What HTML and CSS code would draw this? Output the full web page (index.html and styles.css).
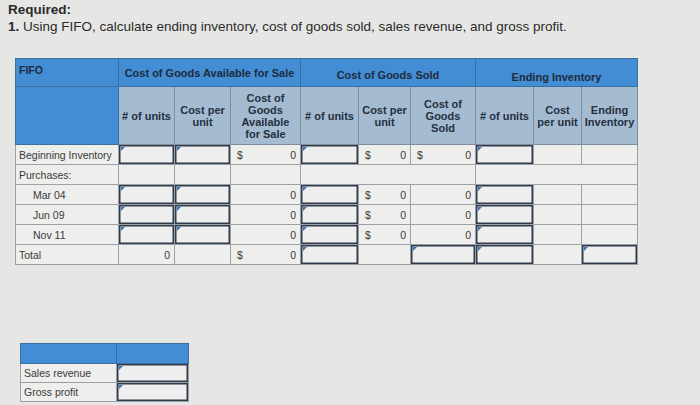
FILE: index.html
```html
<!DOCTYPE html>
<html>
<head>
<meta charset="utf-8">
<link rel="stylesheet" href="styles.css">
</head>
<body>
<div class="page">
  <div class="req">Required:</div>
  <div class="q"><b>1.</b> Using FIFO, calculate ending inventory, cost of goods sold, sales revenue, and gross profit.</div>

  <table class="grid">
    <colgroup>
      <col class="c-label"><col class="c1"><col class="c2"><col class="c3"><col class="c4"><col class="c5"><col class="c6"><col class="c7"><col class="c8"><col class="c9">
    </colgroup>
    <tr class="h1">
      <th class="fifo">FIFO</th>
      <th colspan="3" class="grp">Cost of Goods Available for Sale</th>
      <th colspan="3" class="grp g2">Cost of Goods Sold</th>
      <th colspan="3" class="grp g3">Ending Inventory</th>
    </tr>
    <tr class="h2">
      <th class="blank"></th>
      <th class="sub">#&nbsp;of units</th>
      <th class="sub">Cost per<br>unit</th>
      <th class="sub">Cost of<br>Goods<br>Available<br>for Sale</th>
      <th class="sub">#&nbsp;of units</th>
      <th class="sub">Cost per<br>unit</th>
      <th class="sub">Cost of<br>Goods<br>Sold</th>
      <th class="sub">#&nbsp;of units</th>
      <th class="sub">Cost<br>per unit</th>
      <th class="sub">Ending<br>Inventory</th>
    </tr>
    <tr>
      <td class="lbl">Beginning Inventory</td>
      <td class="in"></td><td class="in"></td>
      <td class="val"><span class="d">$</span><span>0</span></td>
      <td class="in"></td>
      <td class="val"><span class="d">$</span><span>0</span></td>
      <td class="val"><span class="d">$</span><span>0</span></td>
      <td class="in"></td><td></td><td></td>
    </tr>
    <tr>
      <td class="lbl">Purchases:</td>
      <td></td><td></td><td></td><td colspan="3"></td><td colspan="3"></td>
    </tr>
    <tr>
      <td class="lbl ind">Mar 04</td>
      <td class="in"></td><td class="in"></td>
      <td class="val r">0</td>
      <td class="in"></td>
      <td class="val"><span class="d">$</span><span>0</span></td>
      <td class="val r">0</td>
      <td class="in"></td><td></td><td></td>
    </tr>
    <tr>
      <td class="lbl ind">Jun 09</td>
      <td class="in"></td><td class="in"></td>
      <td class="val r">0</td>
      <td class="in"></td>
      <td class="val"><span class="d">$</span><span>0</span></td>
      <td class="val r">0</td>
      <td class="in"></td><td></td><td></td>
    </tr>
    <tr>
      <td class="lbl ind">Nov 11</td>
      <td class="in"></td><td class="in"></td>
      <td class="val r">0</td>
      <td class="in"></td>
      <td class="val"><span class="d">$</span><span>0</span></td>
      <td class="val r">0</td>
      <td class="in"></td><td></td><td></td>
    </tr>
    <tr>
      <td class="lbl">Total</td>
      <td class="val r">0</td><td></td>
      <td class="val"><span class="d">$</span><span>0</span></td>
      <td class="in"></td><td></td>
      <td class="in"></td>
      <td class="in"></td><td></td>
      <td class="in"></td>
    </tr>
  </table>

  <table class="grid small">
    <colgroup><col class="s-label"><col class="s-in"></colgroup>
    <tr class="sh"><th></th><th class="shr"></th></tr>
    <tr><td class="lbl">Sales revenue</td><td class="in"></td></tr>
    <tr><td class="lbl">Gross profit</td><td class="in"></td></tr>
  </table>
</div>
</body>
</html>
```

FILE: styles.css
```css
html, body {
  margin: 0;
  padding: 0;
  background: #e6e7e4;
}
.page {
  width: 700px;
  height: 405px;
  overflow: hidden;
  font-family: "Liberation Sans", Arial, sans-serif;
  color: #2a2a2a;
  padding: 2px 0 0 8px;
  box-sizing: border-box;
}
.req {
  font-weight: bold;
  font-size: 13.5px;
  line-height: 16px;
}
.q {
  font-size: 13.5px;
  line-height: 18px;
  margin-bottom: 22px;
}
.grid {
  border-collapse: collapse;
  table-layout: fixed;
  margin-left: 7px;
}
.grid td, .grid th {
  padding: 0;
  border: 1px solid #9aa0a6;
  position: relative;
  box-sizing: border-box;
}
.c-label { width: 103px; }
.c1 { width: 56px; }
.c2 { width: 56px; }
.c3 { width: 70px; }
.c4 { width: 58px; }
.c5 { width: 52px; }
.c6 { width: 65px; }
.c7 { width: 58px; }
.c8 { width: 48px; }
.c9 { width: 56px; }

.h1 th {
  background: #438dd5;
  height: 28px;
  font-size: 11px;
  font-weight: bold;
  color: #1f2b3a;
  border-color: #3a6f9e;
  vertical-align: middle;
}
.fifo {
  text-align: left;
  vertical-align: top !important;
  padding: 5px 0 0 3px !important;
  font-size: 10.5px !important;
}
.grp { text-align: center; }
.g2 { padding-top: 5px !important; }
.g3 { padding-top: 9px !important; }
.h2 th {
  height: 58px;
  font-size: 11px;
  font-weight: bold;
  line-height: 12px;
  color: #243040;
  background: #a5bbd1;
  border-color: #7f8e9c;
  text-align: center;
  vertical-align: middle;
}
.h2 .blank {
  background: #438dd5;
  border-color: #3a6f9e;
}
.grid td {
  height: 20px;
  background: #eeeeec;
  font-size: 10.5px;
  color: #3a3a3a;
}
.lbl {
  padding-left: 3px !important;
  white-space: nowrap;
  background: #efefed;
}
.ind { padding-left: 17px !important; }
.val {
  padding: 0 4px 0 6px !important;
}
.val span { display: inline-block; }
.val .d { float: left; }
.val span:last-child { float: right; }
.r { text-align: right; }
.grid td.in {
  box-shadow: inset 0 0 0 1.5px #303b4c;
  background: #eeeeee;
}
.grid td.in::before {
  content: "";
  position: absolute;
  left: 2px;
  top: 2px;
  border-top: 4px solid #3a73b8;
  border-right: 4px solid transparent;
}
.small {
  margin-top: 78px;
  margin-left: 12px;
}
.s-label { width: 96px; }
.s-in { width: 72px; }
.sh th {
  height: 20px;
  background: #438dd5;
  border-color: #3a6f9e;
}
.small td { height: 19px; }
```
